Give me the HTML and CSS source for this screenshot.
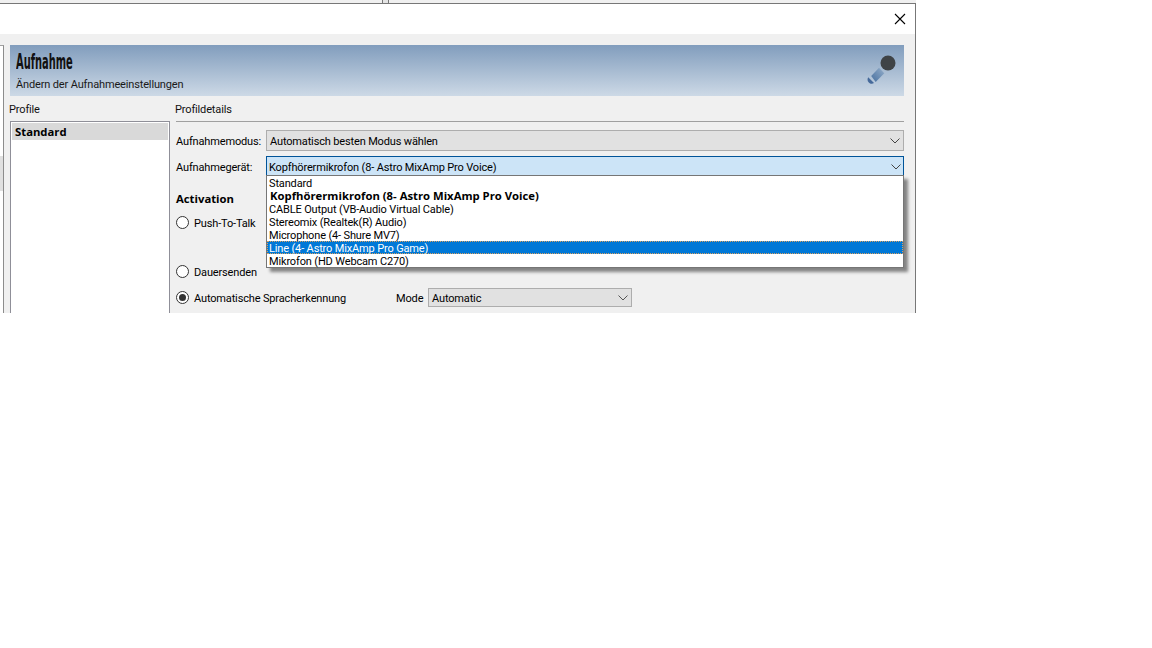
FILE: index.html
```html
<!DOCTYPE html>
<html lang="de">
<head>
<meta charset="utf-8">
<title>Aufnahme</title>
<link rel="stylesheet" href="styles.css">
</head>
<body>
<div class="backdrop"><div class="back-left"></div><div class="back-right"></div></div>
<div class="window">
  <div class="titlebar">
    <svg class="close" width="12" height="12" viewBox="0 0 12 12"><path d="M1 1L11 11M11 1L1 11" stroke="#000" stroke-width="1.1" fill="none"/></svg>
  </div>
  <div class="client">
    <div class="nav-stub"><div class="nav-active"></div></div>
    <div class="main">
      <header class="banner">
        <div class="banner-text">
          <div class="banner-title"><span>Aufnahme</span></div>
          <div class="banner-sub">Ändern der Aufnahmeeinstellungen</div>
        </div>
        <svg class="mic" width="30" height="30" viewBox="0 0 30 30">
          <defs><linearGradient id="micg" x1="0" y1="1" x2="1" y2="0"><stop offset="0" stop-color="#48709f"/><stop offset="1" stop-color="#94aeca"/></linearGradient></defs>
          <path d="M4.2 22L12 13.7L17.3 19.3L8.7 28Z" fill="url(#micg)"/>
          <path d="M1.2 23.2L7 29C5 30.2 3 29.6 1.8 28.4C.6 27.2 0 25.2 1.2 23.2Z" fill="#45699a"/>
          <circle cx="21" cy="9" r="7.5" fill="#3f4346"/>
        </svg>
      </header>
      <div class="columns">
        <section class="profiles">
          <div class="group-label">Profile</div>
          <div class="list"><div class="list-item">Standard</div></div>
        </section>
        <section class="details">
          <div class="group-label">Profildetails</div>
          <div class="rule"></div>
          <div class="row row-mode">
            <label class="row-label">Aufnahmemodus:</label>
            <div class="combo"><span class="txt">Automatisch besten Modus wählen</span>
              <svg class="chev" width="10" height="6" viewBox="0 0 10 6"><path d="M.5 .5L5 5L9.5 .5" stroke="#444" fill="none"/></svg></div>
          </div>
          <div class="row row-device">
            <label class="row-label">Aufnahmegerät:</label>
            <div class="combo combo-open"><span class="txt">Kopfhörermikrofon (8- Astro MixAmp Pro Voice)</span>
              <svg class="chev" width="10" height="6" viewBox="0 0 10 6"><path d="M.5 .5L5 5L9.5 .5" stroke="#444" fill="none"/></svg>
              <ul class="dropdown">
                <li>Standard</li>
                <li class="bold">Kopfhörermikrofon (8- Astro MixAmp Pro Voice)</li>
                <li>CABLE Output (VB-Audio Virtual Cable)</li>
                <li>Stereomix (Realtek(R) Audio)</li>
                <li>Microphone (4- Shure MV7)</li>
                <li class="selected">Line (4- Astro MixAmp Pro Game)</li>
                <li>Mikrofon (HD Webcam C270)</li>
              </ul>
            </div>
          </div>
          <div class="activation">Activation</div>
          <div class="radio-row r1"><span class="radio"></span><span class="txt">Push-To-Talk</span></div>
          <div class="radio-row r2"><span class="radio"></span><span class="txt">Dauersenden</span></div>
          <div class="radio-row r3"><span class="radio checked"></span><span class="txt vad">Automatische Spracherkennung</span>
            <span class="txt mode-label">Mode</span>
            <div class="combo combo-small"><span class="txt">Automatic</span>
              <svg class="chev" width="10" height="6" viewBox="0 0 10 6"><path d="M.5 .5L5 5L9.5 .5" stroke="#555" fill="none"/></svg></div>
          </div>
        </section>
      </div>
    </div>
  </div>
</div>
</body>
</html>
```
FILE: styles.css
```css
* { box-sizing: border-box; }
html, body { margin: 0; padding: 0; background: #fff; }
body { font: 11px/13px Roboto, "Open Sans", sans-serif; letter-spacing: -.15px; color: #000; overflow: hidden; height: 648px; }

.backdrop { display: flex; height: 3px; width: 916px; background: #f0f0f0; }
.back-left { width: 383px; border-right: 1px solid #777; }
.back-right { width: 6px; border-right: 1px solid #777; background: #e4e4e4; }

.window { width: 916px; height: 310px; border-top: 1px solid #777; border-right: 1px solid #777; background: #f0f0f0; overflow: hidden; }
.titlebar { height: 30px; background: #fff; display: flex; justify-content: flex-end; align-items: center; padding: 0 9px 1px 0; }
.client { display: flex; height: 279px; padding-top: 11px; }

.nav-stub { width: 4px; height: 268px; background: #fff; border-top: 1px solid #a0a0a0; border-right: 1px solid #8c8c8c; flex: none; padding-top: 110px; }
.nav-active { height: 35px; background: #e0e0e0; }

.main { width: 900px; padding-left: 6px; }
.banner { height: 51px; width: 894px; background: linear-gradient(#819dbd, #cdd9e6); display: flex; justify-content: space-between; padding: 5px 7px 0 6px; }
.banner-title { height: 24px; font: bold 22px/24px "DejaVu Sans Condensed", "Liberation Sans", sans-serif; letter-spacing: 0; color: #111; }
.banner-title span { display: inline-block; transform: scaleX(.5); transform-origin: left center; }
.banner-sub { color: #1a1a1a; margin-top: 4px; }
.mic { margin-top: 4px; }

.columns { display: flex; }
.profiles { width: 160px; flex: none; }
.group-label { height: 25px; padding-top: 7px; margin-left: -1px; color: #111; }
.list { height: 200px; background: #fff; border: 1px solid #8f8f98; padding: 1px; }
.list-item { height: 17px; background: #d9d9d9; padding: 2px 3px; font: 700 11.3px/13px "Open Sans", sans-serif; letter-spacing: 0; }

.details { width: 734px; padding-left: 6px; position: relative; }
.rule { height: 1px; background: #a0a0a0; }
.row { display: flex; align-items: center; height: 21px; }
.row-mode { margin-top: 8px; }
.row-device { margin-top: 5px; }
.row-label { width: 90px; flex: none; padding-top: 2px; }
.txt { padding-top: 2px; }
.combo { flex: 1; height: 21px; background: #e1e1e1; border: 1px solid #adadad; display: flex; align-items: center; justify-content: space-between; padding: 0 3px; position: relative; }
.combo-open { background: #cce4f7; border-color: #005499; padding: 0 2px; }
.chev { flex: none; }
.combo-small { flex: none; width: 204px; height: 19px; }

.dropdown { position: absolute; left: -1px; right: -1px; top: 18px; margin: 0; padding: 0; list-style: none; background: #fff; border: 1px solid #767676; box-shadow: 4px 4px 3px rgba(0,0,0,.45); height: 93px; z-index: 2; }
.dropdown li { height: 13px; padding-left: 2px; line-height: 15px; }
.dropdown .bold { font: 700 11.3px/13px "Open Sans", sans-serif; letter-spacing: 0; padding-left: 3px; }
.dropdown .selected { background: #0078d7; color: #fff; outline: 1px dotted #d8a060; outline-offset: -1px; }

.activation { font: 700 11.3px/13px "Open Sans", sans-serif; letter-spacing: 0; margin-top: 15px; height: 13px; }
.radio-row { display: flex; align-items: center; height: 13px; }
.r1 { margin-top: 11px; }
.r2 { margin-top: 36px; }
.r3 { margin-top: 13px; }
.radio { width: 13px; height: 13px; flex: none; border-radius: 50%; border: 1px solid #333; background: #fff; margin-right: 5px; position: relative; }
.radio.checked::after { content: ""; position: absolute; left: 2px; top: 2px; width: 7px; height: 7px; border-radius: 50%; background: #333; }
.vad { width: 202px; flex: none; }
.mode-label { width: 32px; flex: none; }
```
